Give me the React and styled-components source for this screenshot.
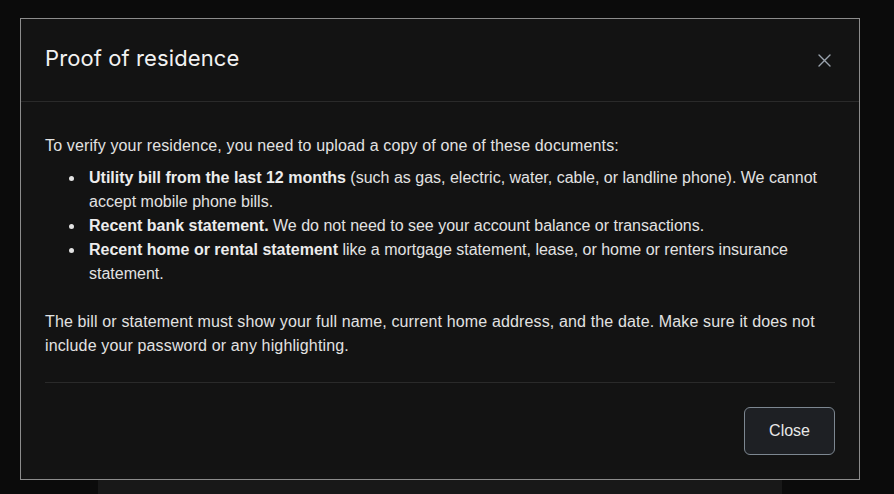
import React from "react";
import styled, { createGlobalStyle } from "styled-components";

const GlobalStyle = createGlobalStyle`
    html, body {
        margin: 0;
        padding: 0;
        background: #0b0b0b;
        height: 100%;
    }
    body {
        font-family: "Liberation Sans", Arial, sans-serif;
        overflow: hidden;
    }
`;

function CloseIcon() {
    return (
        <svg width="13" height="13" viewBox="0 0 13 13" fill="none">
            <path
                d="M1 1L12 12M12 1L1 12"
                stroke="#9aa3ad"
                strokeWidth="1.4"
                strokeLinecap="round"
            />
        </svg>
    );
}

function App() {
    return (
        <>
            <GlobalStyle />
            <StyledPage>
                <StyledBackPanel />
            </StyledPage>
            <StyledModal role="dialog">
                <StyledHeader>
                    <StyledTitle>Proof of residence</StyledTitle>
                    <StyledIconButton aria-label="Close">
                        <CloseIcon />
                    </StyledIconButton>
                </StyledHeader>
                <StyledBody>
                    <StyledText>
                        To verify your residence, you need to upload a copy of one of these
                        documents:
                    </StyledText>
                    <StyledList>
                        <li>
                            <b>Utility bill from the last 12 months</b> (such as gas, electric,
                            water, cable, or landline phone). We cannot accept mobile phone bills.
                        </li>
                        <li>
                            <b>Recent bank statement.</b> We do not need to see your account
                            balance or transactions.
                        </li>
                        <li>
                            <b>Recent home or rental statement</b> like a mortgage statement,
                            lease, or home or renters insurance statement.
                        </li>
                    </StyledList>
                    <StyledText>
                        The bill or statement must show your full name, current home address,
                        and the date. Make sure it does not include your password or any
                        highlighting.
                    </StyledText>
                </StyledBody>
                <StyledFooter>
                    <StyledButton>Close</StyledButton>
                </StyledFooter>
            </StyledModal>
        </>
    );
}

const StyledPage = styled.div`
    height: 494px;
    box-sizing: border-box;
    padding: 400px 0 0 98px;
    display: flex;
`;
const StyledBackPanel = styled.div`
    width: 684px;
    background: #181818;
`;
const StyledModal = styled.div`
    position: absolute;
    left: 20px;
    top: 18px;
    width: 840px;
    box-sizing: border-box;
    background: #131313;
    border: 1px solid #8c8c8c;
    color: #e2e2e2;
`;
const StyledHeader = styled.div`
    height: 78px;
    padding: 0 24px 4px;
    display: flex;
    align-items: center;
    justify-content: space-between;
    border-bottom: 1px solid #2a2a2a;
`;
const StyledTitle = styled.h2`
    margin: 0;
    font-family: Inter, "Liberation Sans", sans-serif;
    font-size: 22px;
    font-weight: 400;
    color: #f2f2f2;
    letter-spacing: 0.1px;
`;
const StyledIconButton = styled.button`
    width: 28px;
    height: 28px;
    margin: 4px -3px 0 0;
    padding: 0;
    border: none;
    background: transparent;
    display: flex;
    align-items: center;
    justify-content: center;
    cursor: pointer;
`;
const StyledBody = styled.div`
    margin: 0 24px;
    padding: 32px 0 24px;
    border-bottom: 1px solid #2a2a2a;
    font-size: 16px;
    line-height: 24px;
`;
const StyledText = styled.p`
    margin: 0;
    letter-spacing: 0.14px;
`;
const StyledList = styled.ul`
    margin: 8px 0 24px;
    padding-left: 44px;
    list-style: none;
    li {
        position: relative;
    }
    li::before {
        content: "";
        position: absolute;
        left: -20px;
        top: 10px;
        width: 5px;
        height: 5px;
        border-radius: 50%;
        background: #e2e2e2;
    }
    b {
        font-weight: 700;
        color: #ececec;
    }
`;
const StyledFooter = styled.div`
    padding: 24px;
    display: flex;
    justify-content: flex-end;
`;
const StyledButton = styled.button`
    height: 48px;
    padding: 0 24px;
    border: 1px solid #7d8791;
    border-radius: 6px;
    background: #1e2024;
    color: #e8e8e8;
    font-family: "Liberation Sans", Arial, sans-serif;
    font-size: 16px;
    cursor: pointer;
`;

export default App;
